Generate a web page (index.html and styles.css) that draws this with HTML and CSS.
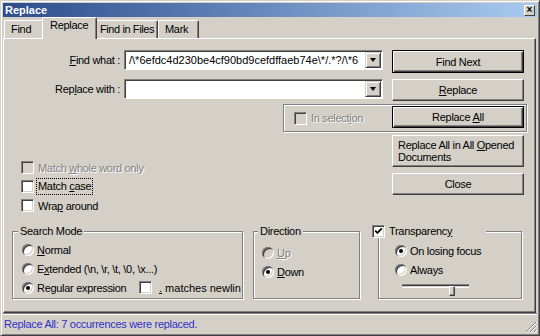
FILE: index.html
```html
<!DOCTYPE html>
<html lang="en">
<head>
    <meta charset="UTF-8">
    <title>Replace</title>
    <link rel="stylesheet" href="styles.css">
</head>
<body>
    <div class="window">
        <div class="titlebar">
            <span class="title">Replace</span>
            <span class="close-box">&#215;</span>
        </div>
        <div class="tabs">
            <div class="tab tab-find">Find</div>
            <div class="tab tab-replace active">Replace</div>
            <div class="tab tab-files">Find in Files</div>
            <div class="tab tab-mark">Mark</div>
        </div>
        <div class="panel">
            <div class="find-grid">
                <label class="field-label"><u>F</u>ind what :</label>
                <div class="combo">
                    <span class="combo-text">/\*6efdc4d230be4cf90bd9cefdffaeb74e\*/.*?/\*6</span>
                    <span class="drop"><span class="arrow"></span></span>
                </div>
                <button class="btn btn-default">Find Next</button>

                <label class="field-label second">Rep<u>l</u>ace with :</label>
                <div class="combo second">
                    <span class="combo-text"></span>
                    <span class="drop"><span class="arrow"></span></span>
                </div>
                <button class="btn second"><u>R</u>eplace</button>

                <div class="selection-box">
                    <span class="check disabled"></span>
                    <span class="muted">In select<u>i</u>on</span>
                </div>
                <button class="btn btn-default replace-all">Replace <u>A</u>ll</button>
            </div>

            <div class="lower">
                <div class="options">
                    <div class="check-row">
                        <span class="check disabled"></span>
                        <span class="muted">Match <u>w</u>hole word only</span>
                    </div>
                    <div class="check-row">
                        <span class="check"></span>
                        <span class="focus">Match <u>c</u>ase</span>
                    </div>
                    <div class="check-row">
                        <span class="check"></span>
                        <span>Wra<u>p</u> around</span>
                    </div>
                </div>
                <div class="side-buttons">
                    <button class="btn btn-tall">Replace All in All <u>O</u>pened<br>Documents</button>
                    <button class="btn">Close</button>
                </div>
            </div>

            <div class="groups">
                <fieldset class="group search-mode">
                    <legend>Search Mode</legend>
                    <div class="radio-list">
                        <div class="radio-row"><span class="radio"></span><span><u>N</u>ormal</span></div>
                        <div class="radio-row"><span class="radio"></span><span>E<u>x</u>tended (\n, \r, \t, \0, \x...)</span></div>
                        <div class="radio-row">
                            <span class="regex"><span class="radio on"></span><span>Re<u>g</u>ular expression</span></span>
                            <span class="check"></span>
                            <span class="newline"><u>.</u> matches newline</span>
                        </div>
                    </div>
                </fieldset>

                <fieldset class="group direction">
                    <legend>Direction</legend>
                    <div class="radio-list">
                        <div class="radio-row"><span class="radio disabled"></span><span class="muted"><u>U</u>p</span></div>
                        <div class="radio-row"><span class="radio on"></span><span><u>D</u>own</span></div>
                    </div>
                </fieldset>

                <fieldset class="group transparency">
                    <legend>
                        <span class="check checked">
                            <svg width="9" height="9" viewBox="0 0 9 9"><path d="M1.2 3.6 L3.4 5.9 L7.8 1.4" fill="none" stroke="#000" stroke-width="1.8"/></svg>
                        </span>
                        <span>Transparenc<u>y</u></span>
                    </legend>
                    <div class="radio-list">
                        <div class="radio-row"><span class="radio on"></span><span>On losing focus</span></div>
                        <div class="radio-row"><span class="radio"></span><span>Always</span></div>
                    </div>
                    <div class="slider">
                        <div class="track"></div>
                        <div class="thumb"></div>
                    </div>
                </fieldset>
            </div>
        </div>
        <div class="statusbar">
            <span class="status-text">Replace All: 7 occurrences were replaced.</span>
            <svg class="grip" width="12" height="12" viewBox="0 0 12 12" shape-rendering="crispEdges">
                <path d="M11 1 L1 11 M11 5 L5 11 M11 9 L9 11" stroke="#808080"/>
                <path d="M12 1 L1 12 M12 5 L5 12 M12 9 L9 12" stroke="#fff"/>
            </svg>
        </div>
    </div>
</body>
</html>
```

FILE: styles.css
```css
* {
    box-sizing: border-box;
}
body {
    margin: 0;
    font: 11px "Liberation Sans", Arial, sans-serif;
    letter-spacing: -0.3px;
    color: #000;
    background: #d4d0c8;
}
u {
    text-decoration-thickness: 1px;
}

/* window frame */
.window {
    width: 540px;
    height: 336px;
    display: flex;
    flex-direction: column;
    padding: 2px;
    border: 1px solid;
    border-color: #d4d0c8 #404040 #404040 #d4d0c8;
    box-shadow: inset 1px 1px #fff, inset -1px -1px #808080;
    background: #d4d0c8;
}
.titlebar {
    height: 14px;
    flex: none;
    display: flex;
    align-items: center;
    justify-content: space-between;
    padding: 0 2px;
    background: linear-gradient(to right, #2c4c8c, #a9caf0);
    color: #fff;
    font-weight: bold;
    letter-spacing: 0;
}
.close-box {
    width: 11px;
    height: 11px;
    display: flex;
    align-items: center;
    justify-content: center;
    background: #d4d0c8;
    border: 1px solid;
    border-color: #fff #404040 #404040 #fff;
    color: #000;
    font-size: 10px;
    line-height: 1;
}

/* tabs */
.tabs {
    height: 21px;
    flex: none;
    display: flex;
    align-items: flex-end;
    padding-left: 1px;
}
.tab {
    height: 18px;
    padding-left: 6px;
    line-height: 16px;
    border: 1px solid;
    border-bottom: none;
    border-color: #fff #404040 transparent #fff;
    border-radius: 2px 2px 0 0;
    box-shadow: inset -1px 0 #808080;
    white-space: nowrap;
}
.tab-find { width: 40px; }
.tab-replace { width: 51px; }
.tab-files {
    width: 63px;
    padding-left: 4px;
    letter-spacing: -0.4px;
}
.tab-mark { width: 41px; }
.tab.active {
    width: 55px;
    height: 22px;
    margin: 0 -2px -1px;
    padding-left: 7px;
    line-height: 15px;
    background: #d4d0c8;
    z-index: 1;
}

/* tab page */
.panel {
    flex: 1;
    margin-right: 1px;
    padding-top: 11px;
    border: 1px solid;
    border-color: #fff #404040 #404040 #fff;
    box-shadow: inset -1px -1px #808080;
}
.find-grid {
    display: grid;
    grid-template-columns: 120px 259px 141px;
    align-items: start;
}
.field-label {
    text-align: right;
    padding-right: 4px;
    line-height: 20px;
    white-space: nowrap;
}
.second {
    margin-top: 6px;
}
.combo {
    height: 20px;
    display: flex;
    background: #fff;
    border: 1px solid;
    border-color: #808080 #fff #fff #808080;
    box-shadow: inset 1px 1px #404040;
}
.combo-text {
    flex: 1;
    overflow: hidden;
    white-space: nowrap;
    padding: 2px 0 0 4px;
    line-height: 14px;
    letter-spacing: 0;
}
.drop {
    width: 16px;
    height: 16px;
    flex: none;
    margin: 1px 1px 1px 0;
    display: flex;
    align-items: center;
    justify-content: center;
    background: #d4d0c8;
    border: 1px solid;
    border-color: #d4d0c8 #404040 #404040 #d4d0c8;
    box-shadow: inset 1px 1px #fff, inset -1px -1px #808080;
}
.arrow {
    width: 0;
    height: 0;
    border-left: 3.5px solid transparent;
    border-right: 3.5px solid transparent;
    border-top: 4px solid #000;
}

/* push buttons */
.btn {
    width: 132px;
    height: 22px;
    margin-left: 9px;
    padding: 0;
    font: inherit;
    letter-spacing: inherit;
    color: #000;
    background: #d4d0c8;
    border: 1px solid;
    border-color: #fff #404040 #404040 #fff;
    box-shadow: inset -1px -1px #808080;
}
.btn-default {
    height: 23px;
    border-color: #000;
    box-shadow: inset 1px 1px #fff, inset -1px -1px #404040, inset -2px -2px #808080;
}
.replace-all {
    grid-row: 3;
    grid-column: 3;
    height: 22px;
    margin-top: 5px;
}
.btn-tall {
    height: 32px;
    margin: 0;
    padding: 0 5px;
    text-align: left;
    line-height: 12px;
    white-space: nowrap;
}

.selection-box {
    grid-row: 3;
    grid-column: 2 / 4;
    height: 28px;
    margin: 3px -3px 0 159px;
    display: flex;
    align-items: center;
    gap: 4px;
    padding-left: 10px;
    border: 1px solid #808080;
    box-shadow: inset 1px 1px #fff, 1px 1px #fff;
}

/* check boxes and radios */
.check {
    width: 13px;
    height: 13px;
    flex: none;
    display: flex;
    align-items: center;
    justify-content: center;
    background: #fff;
    border: 1px solid;
    border-color: #808080 #fff #fff #808080;
    box-shadow: inset 1px 1px #404040, inset -1px -1px #d4d0c8;
}
.check.disabled {
    background: #d4d0c8;
}
.radio {
    position: relative;
    width: 12px;
    height: 12px;
    flex: none;
    border-radius: 50%;
    background: #fff;
    box-shadow: inset 1px 1px #808080, inset -1px -1px #fff, inset 2px 2px #404040, inset -2px -2px #d4d0c8;
}
.radio.disabled {
    background: #d4d0c8;
}
.radio.on::after {
    content: "";
    position: absolute;
    left: 4px;
    top: 4px;
    width: 4px;
    height: 4px;
    border-radius: 50%;
    background: #000;
}
.muted {
    color: #808080;
    text-shadow: 1px 1px #fff;
}
.focus {
    outline: 1px dotted #000;
    padding: 1px 1px;
    margin-left: -1px;
    line-height: 13px;
}

.lower {
    display: flex;
    margin-top: 3px;
}
.options {
    width: 388px;
    padding: 23px 0 0 17px;
}
.check-row {
    height: 19px;
    display: flex;
    align-items: center;
    gap: 4px;
    white-space: nowrap;
}
.side-buttons {
    width: 132px;
    display: flex;
    flex-direction: column;
    gap: 6px;
}
.side-buttons .btn {
    margin-left: 0;
}

/* group boxes */
.groups {
    display: flex;
    margin-top: 10px;
    padding-left: 8px;
}
.group {
    height: 74px;
    margin: 0;
    padding: 0;
    min-width: 0;
    border: 1px solid #808080;
    box-shadow: inset 1px 1px #fff, 1px 1px #fff;
}
.group legend {
    padding: 0 2px;
    line-height: 13px;
    background: #d4d0c8;
    white-space: nowrap;
}
.radio-list {
    padding-left: 9px;
}
.radio-row {
    height: 19px;
    display: flex;
    align-items: center;
    gap: 3px;
    white-space: nowrap;
    overflow: hidden;
}
.search-mode {
    width: 231px;
}
.search-mode legend {
    margin-left: 5px;
}
.search-mode .radio-list {
    padding-top: 2px;
    padding-right: 1px;
}
.regex {
    width: 114px;
    flex: none;
    display: flex;
    align-items: center;
    gap: 3px;
}
.regex + .check {
    margin-right: 4px;
}
.newline {
    letter-spacing: 0;
}
.direction {
    width: 107px;
    margin-left: 10px;
}
.direction legend {
    margin-left: 4px;
}
.direction .radio-list {
    padding: 5px 0 0 8px;
}
.transparency {
    width: 144px;
    margin-left: 18px;
}
.transparency legend {
    margin-left: -7px;
    padding: 0 34px 0 0;
    display: flex;
    align-items: center;
    gap: 4px;
}
.transparency .radio-list {
    padding: 3px 0 0 16px;
}
.slider {
    position: relative;
    width: 67px;
    height: 14px;
    margin-left: 23px;
}
.track {
    height: 4px;
    margin-top: 5px;
    border-top: 1px solid #808080;
    border-bottom: 1px solid #fff;
    box-shadow: inset 0 1px #404040;
}
.thumb {
    position: absolute;
    left: 47px;
    top: 2px;
    width: 6px;
    height: 10px;
    background: #d4d0c8;
    border: 1px solid;
    border-color: #fff #404040 #404040 #fff;
    box-shadow: inset -1px -1px #808080;
}

/* status line */
.statusbar {
    height: 20px;
    flex: none;
    display: flex;
    align-items: center;
    padding-left: 1px;
    border-top: 1px solid #808080;
    box-shadow: inset 0 1px #fff;
}
.status-text {
    flex: 1;
    color: #3030c8;
}
.grip {
    align-self: flex-end;
}
```
